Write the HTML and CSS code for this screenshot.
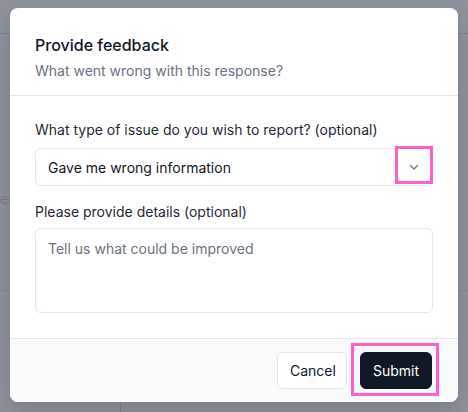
FILE: index.html
```html
<!DOCTYPE html>
<html lang="en">
<head>
<meta charset="utf-8">
<title>Provide feedback</title>
<link rel="stylesheet" href="styles.css">
</head>
<body>
<div class="backdrop">
  <div class="bg-line bg-line-top"></div>
  <div class="bg-text">ed</div>
  <div class="bg-line bg-line-mid"></div>
  <div class="bg-divider"></div>
  <div class="modal">
    <div class="modal-header">
      <h2 class="title">Provide feedback</h2>
      <p class="subtitle">What went wrong with this response?</p>
    </div>
    <div class="modal-body">
      <label class="label">What type of issue do you wish to report? (optional)</label>
      <div class="select">
        <span class="select-value">Gave me wrong information</span>
        <span class="select-icon">
          <svg width="12" height="12" viewBox="0 0 12 12" fill="none"><path d="M2.5 4.5L6 8l3.5-3.5" stroke="#6b7280" stroke-width="1.2" stroke-linecap="round" stroke-linejoin="round"/></svg>
        </span>
      </div>
      <label class="label label-details">Please provide details (optional)</label>
      <div class="textarea">Tell us what could be improved</div>
    </div>
    <div class="modal-footer">
      <button class="btn btn-cancel">Cancel</button>
      <button class="btn btn-submit">Submit</button>
    </div>
  </div>
</div>
</body>
</html>
```
FILE: styles.css
```css
*, *::before, *::after { box-sizing: border-box; }
html, body { margin: 0; padding: 0; }
body {
  width: 468px;
  height: 412px;
  overflow: hidden;
  font-family: Inter, "Liberation Sans", sans-serif;
  background: #8e929b;
}
.backdrop {
  position: relative;
  width: 468px;
  height: 412px;
  padding: 8px 10px 0;
}
.bg-line {
  position: absolute;
  left: 0;
  right: 0;
  height: 1px;
}
.bg-line-top { top: 33px; background: #7d7fa3; }
.bg-line-mid { top: 290px; background: #868a93; }
.bg-text {
  position: absolute;
  left: 0;
  top: 190px;
  font-size: 14px;
  color: #7a7e87;
}
.bg-divider {
  position: absolute;
  left: 120px;
  top: 402px;
  width: 1px;
  height: 10px;
  background: #7f838c;
}
.modal {
  position: relative;
  width: 448px;
  height: 394px;
  background: #fff;
  border-radius: 8px;
  overflow: hidden;
  display: flex;
  flex-direction: column;
  box-shadow: 0 10px 25px rgba(0,0,0,0.15);
}
.modal-header {
  padding: 25px 25px 14px;
  border-bottom: 1px solid #e5e7eb;
}
.title {
  margin: 0;
  font-size: 16px;
  line-height: 24px;
  font-weight: 500;
  color: #111827;
}
.subtitle {
  margin: 4px 0 0;
  font-size: 14px;
  line-height: 20px;
  color: #6b7280;
}
.modal-body {
  padding: 24px 25px 24px;
  display: flex;
  flex-direction: column;
  flex: 1;
}
.label {
  font-size: 14px;
  line-height: 20px;
  color: #1f2937;
  font-weight: 400;
}
.label-details { margin-top: 16px; }
.select {
  margin-top: 8px;
  height: 38px;
  border: 1px solid #e5e7eb;
  border-radius: 6px;
  display: flex;
  align-items: center;
  justify-content: space-between;
  padding-left: 12px;
  position: relative;
}
.select-value {
  font-size: 14px;
  color: #111827;
}
.select-icon {
  width: 38px;
  height: 36px;
  margin-right: -1px;
  display: flex;
  align-items: center;
  justify-content: center;
}
.select::after {
  content: "";
  position: absolute;
  top: -3px;
  right: -1px;
  width: 38px;
  height: 38px;
  border: 3px solid #ff5fc8;
}
.textarea {
  margin-top: 6px;
  height: 85px;
  border: 1px solid #e5e7eb;
  border-radius: 6px;
  padding: 10px 12px;
  font-size: 14px;
  line-height: 20px;
  color: #6b7280;
}
.modal-footer {
  height: 64px;
  background: #f9fafb;
  border-top: 1px solid #e5e7eb;
  display: flex;
  justify-content: flex-end;
  align-items: center;
  gap: 13px;
  padding: 0 26px 1px;
}
.btn {
  font-family: inherit;
  font-size: 14px;
  height: 37px;
  border-radius: 6px;
  padding: 0 12px;
  cursor: pointer;
}
.btn-cancel {
  width: 70px;
  background: #fff;
  border: 1px solid #e5e7eb;
  color: #111827;
}
.btn-submit {
  position: relative;
  width: 72px;
  background: #111827;
  border: 1px solid #111827;
  color: #fff;
}
.btn-submit::after {
  content: "";
  position: absolute;
  top: -10px;
  bottom: -8px;
  left: -10px;
  right: -8px;
  border: 3px solid #ff5fc8;
}
```
